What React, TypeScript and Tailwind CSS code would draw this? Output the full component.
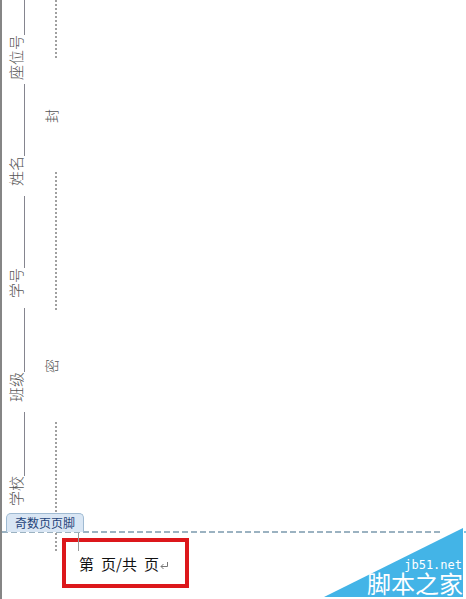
const dots =
  "w-[2px] bg-[repeating-linear-gradient(to_bottom,#a0a0a0_0px,#a0a0a0_2px,transparent_2px,transparent_4px)]";

const dashes =
  "bg-[repeating-linear-gradient(to_right,#9bb2c1_0px,#9bb2c1_6px,transparent_6px,transparent_9px)]";

const sideways = "rotate-180 [writing-mode:vertical-rl] [text-orientation:sideways]";

const fields = [
  { label: "座位号", line: "h-[35px]", gap: "mb-1" },
  { label: "姓名", line: "h-[72px]", gap: "mb-[10px]" },
  { label: "学号", line: "h-[72px]", gap: "mb-[10px]" },
  { label: "班级", line: "h-16", gap: "mb-[10px]" },
  { label: "学校", line: "h-16", gap: "mb-0" },
];

function Field({ label, line, gap }: { label: string; line: string; gap: string }) {
  return (
    <div className={`flex flex-col ${gap}`}>
      <span className={`w-px self-end bg-[#85858f] ${line}`} />
      <span className={`text-[15px] leading-5 ${sideways}`}>{label}</span>
    </div>
  );
}

function SealMark({ text }: { text: string }) {
  return (
    <div className="flex h-[112px] items-center">
      <span className={`text-[14px] leading-5 ${sideways}`}>{text}</span>
    </div>
  );
}

function Watermark() {
  return (
    <div className="absolute right-[3px] bottom-[2px] h-[69px] w-[139px] text-white">
      <svg className="absolute inset-0 h-full w-full" viewBox="0 0 139 69" aria-hidden="true">
        <path d="M0 69 139 0V69Z" fill="#43b4e7" />
      </svg>
      <div className="relative flex h-full flex-col items-end justify-end whitespace-nowrap">
        <span className="pr-px font-['DejaVu_Sans_Mono',monospace] text-[12px] leading-4">jb51.net</span>
        <span className="font-['Liberation_Sans','Noto_Sans_CJK_SC',sans-serif] text-[24px] leading-6">
          脚本之家
        </span>
      </div>
    </div>
  );
}

export default function App() {
  return (
    <main className="relative flex min-h-screen flex-col overflow-hidden border-l-2 border-[#858585] bg-white font-['Noto_Sans_CJK_SC',sans-serif]">
      <section className="relative flex gap-4 pl-1 font-light text-[#555555]">
        <div className="flex w-[19px] flex-col">
          {fields.map((f) => (
            <Field key={f.label} {...f} />
          ))}
        </div>
        <div className="flex h-[531px] w-5 flex-col items-center">
          <span className={`mr-1 h-[60px] self-end ${dots}`} />
          <SealMark text="封" />
          <span className={`mr-1 h-[138px] self-end ${dots}`} />
          <SealMark text="密" />
          <span className={`mr-1 flex-1 self-end ${dots}`} />
        </div>
        <div className="absolute -bottom-px left-1 rounded-t-[5px] border border-b-0 border-[#9fbad2] bg-[#d9e6f4] px-2 text-[12px] leading-[18px] font-normal text-[#1f4379]">
          奇数页页脚
        </div>
      </section>

      <div className="flex h-[2px]">
        <span className={`flex-1 ${dashes}`} />
        <span className="ml-6 w-[2px] bg-[#7fc3e0]" />
      </div>

      <footer className="relative flex flex-1 items-start">
        <span className={`ml-[53px] h-5 ${dots}`} />
        <span className="absolute top-0 left-[76px] h-[18px] w-px bg-[#999999]" />
        <div className="mt-[5px] ml-[5px] flex h-[50px] w-[127px] items-center border-4 border-[#dc171b] pt-[2px] pl-[13px] text-[15px] leading-5 text-[#111111]">
          <p className="flex gap-[7px]">
            <span>第</span>
            <span>页/共</span>
            <span>页</span>
          </p>
          <svg className="mt-1 ml-px h-2 w-2" viewBox="0 0 8 8" fill="none" stroke="#777777" aria-hidden="true">
            <path d="M7.5 0V4.5H1M3.5 2 1 4.5 3.5 7" />
          </svg>
        </div>
      </footer>
      <Watermark />
    </main>
  );
}
